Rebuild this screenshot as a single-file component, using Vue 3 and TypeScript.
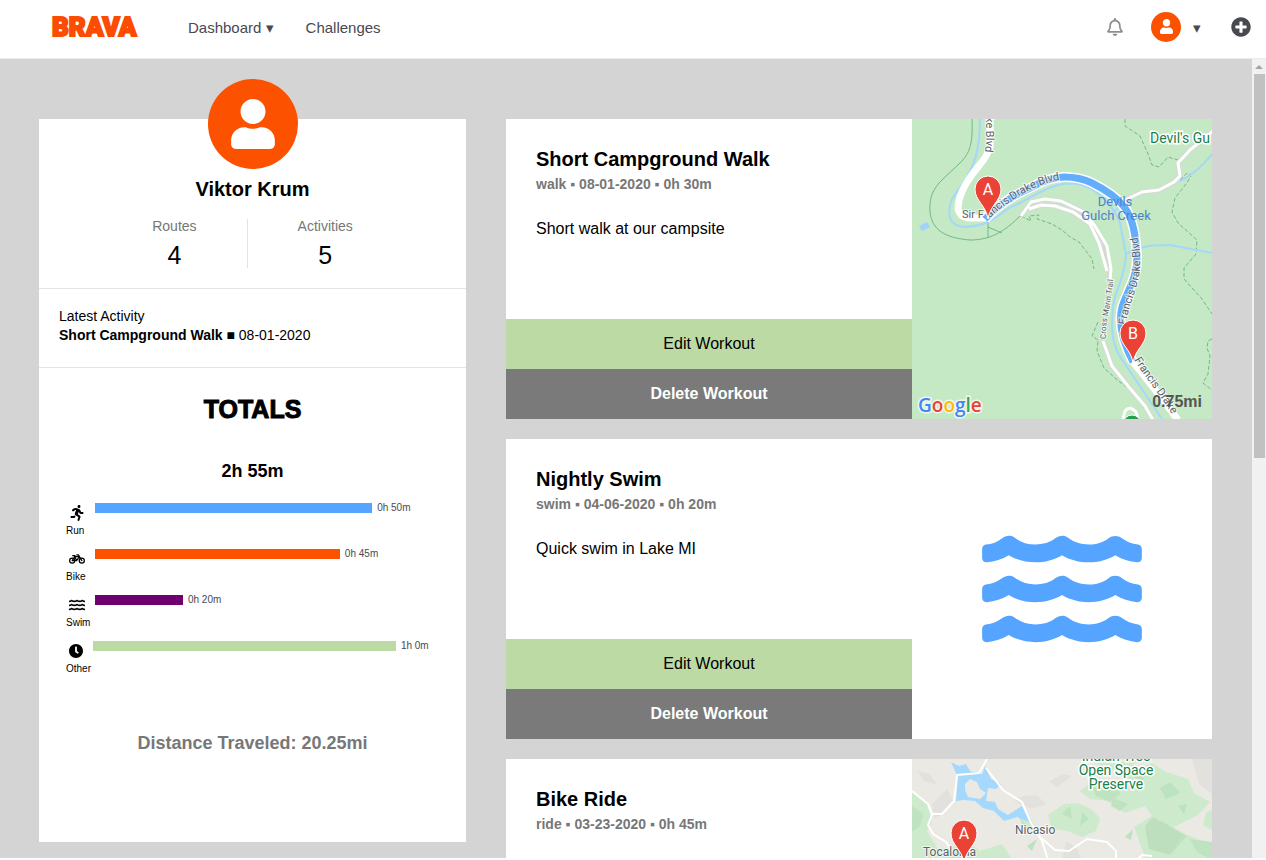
<script setup lang="ts">
interface Total {
  key: string
  label: string
  time: string
  share: number
}

interface Workout {
  id: number
  title: string
  kind: string
  date: string
  time: string
  note?: string
  art: 'gulch' | 'waves' | 'nicasio'
  miles?: string
}

const totals: Total[] = [
  { key: 'run', label: 'Run', time: '0h 50m', share: 74.7 },
  { key: 'bike', label: 'Bike', time: '0h 45m', share: 66 },
  { key: 'swim', label: 'Swim', time: '0h 20m', share: 23.7 },
  { key: 'other', label: 'Other', time: '1h 0m', share: 81.2 },
]

const workouts: Workout[] = [
  { id: 1, title: 'Short Campground Walk', kind: 'walk', date: '08-01-2020', time: '0h 30m', note: 'Short walk at our campsite', art: 'gulch', miles: '0.75mi' },
  { id: 2, title: 'Nightly Swim', kind: 'swim', date: '04-06-2020', time: '0h 20m', note: 'Quick swim in Lake MI', art: 'waves' },
  { id: 3, title: 'Bike Ride', kind: 'ride', date: '03-23-2020', time: '0h 45m', art: 'nicasio' },
]

const userPath = 'M224 256c70.7 0 128-57.3 128-128S294.7 0 224 0 96 57.3 96 128s57.3 128 128 128zm89.6 32h-16.7c-22.2 10.2-46.9 16-72.9 16s-50.6-5.8-72.9-16h-16.7C60.2 288 0 348.2 0 422.4V464c0 26.5 21.5 48 48 48h352c26.5 0 48-21.5 48-48v-41.6c0-74.2-60.2-134.4-134.4-134.4z'
const wavePath = 'M562.1 383.9c-21.5-2.4-42.1-10.5-57.9-22.9-14.1-11.1-34.2-11.3-48.2 0-37.9 30.4-107.2 30.4-145.7-1.5-13.5-11.2-33-9.1-46.7 1.8-38 30.1-106.9 30-145.2-1.7-13.5-11.2-33.3-8.9-47.1 2-15.5 12.2-36 20.1-57.7 22.4-7.9.8-13.6 7.8-13.6 15.7v32.2c0 9.1 7.6 16.8 16.7 16 28.8-2.5 56.1-11.4 79.4-25.9 56.5 34.6 137 34.1 192 0 56.5 34.6 137 34.1 192 0 23.3 14.2 50.9 23.3 79.1 25.8 9.1.8 16.7-6.9 16.7-16v-31.6c.1-8-5.7-15.4-13.8-16.3z'
const blvdPath = 'M73 100C84 88 100 77 118 69C132 61 142 58 152 58C165 58 172 60 180 64C192 70 206 79 213 89C222 101 224 120 225 138C225 160 215 172 210 188C206 204 210 222 221 243'
</script>

<template>
  <div class="page">
    <header class="topbar">
      <a class="logo" href="#">BRAVA</a>
      <nav class="links">
        <a href="#">Dashboard ▾</a>
        <a href="#">Challenges</a>
      </nav>
      <div class="tools">
        <button class="tool" type="button" aria-label="Notifications">
          <svg width="16" height="18" viewBox="0 0 448 512" fill="#8e8e90"><path d="M439.39 362.29c-19.32-20.76-55.47-51.99-55.47-154.29 0-77.7-54.48-139.9-127.94-155.16V32c0-17.67-14.32-32-31.98-32s-31.98 14.33-31.98 32v20.84C118.56 68.1 64.08 130.3 64.08 208c0 102.3-36.15 133.53-55.47 154.29-6 6.45-8.66 14.16-8.61 21.71.11 16.4 12.98 32 32.1 32h383.8c19.12 0 32-15.6 32.1-32 .05-7.55-2.61-15.27-8.61-21.71zM67.53 368c21.22-27.97 44.42-74.33 44.53-159.42 0-.2-.06-.38-.06-.58 0-61.86 50.14-112 112-112s112 50.14 112 112c0 .2-.06.38-.06.58.11 85.1 23.31 131.46 44.53 159.42H67.53zM224 512c35.32 0 63.97-28.65 63.97-64H160.03c0 35.35 28.65 64 63.97 64z" /></svg>
        </button>
        <button class="tool account" type="button" aria-label="Account">
          <span class="face"><svg width="13" height="15" viewBox="0 0 448 512" fill="#fff"><path :d="userPath" /></svg></span>
          <span class="caret">▾</span>
        </button>
        <button class="tool" type="button" aria-label="Add workout">
          <svg width="20" height="20" viewBox="0 0 512 512" fill="#494950"><path d="M256 8C119 8 8 119 8 256s111 248 248 248 248-111 248-248S393 8 256 8zm144 276c0 6.600-5.400 12-12 12h-92v92c0 6.600-5.400 12-12 12h-56c-6.600 0-12-5.400-12-12v-92h-92c-6.600 0-12-5.400-12-12v-56c0-6.600 5.400-12 12-12h92v-92c0-6.600 5.400-12 12-12h56c6.600 0 12 5.400 12 12v92h92c6.600 0 12 5.400 12 12v56z" /></svg>
        </button>
      </div>
    </header>

    <div class="body">
      <main class="content">
        <aside class="profile">
          <section class="who">
            <div class="avatar"><svg width="44" height="50" viewBox="0 0 448 512" fill="#fff"><path :d="userPath" /></svg></div>
            <h1>Viktor Krum</h1>
            <dl class="stats">
              <div><dt>Routes</dt><dd>4</dd></div>
              <div><dt>Activities</dt><dd>5</dd></div>
            </dl>
          </section>
          <section class="latest">
            <p>Latest Activity</p>
            <p><strong>Short Campground Walk</strong> ■ 08-01-2020</p>
          </section>
          <section class="totals">
            <h2>TOTALS</h2>
            <h3>2h 55m</h3>
            <ul class="chart">
              <li v-for="t in totals" :key="t.key" :class="t.key">
                <div class="sport">
                  <svg v-if="t.key === 'run'" width="16" height="16" viewBox="-48 0 512 512"><path d="M272 96c26.510 0 48-21.490 48-48S298.510 0 272 0s-48 21.490-48 48 21.490 48 48 48zM113.690 317.470l-14.800 34.520H32c-17.670 0-32 14.330-32 32s14.330 32 32 32h77.450c19.250 0 36.580-11.440 44.110-29.090l8.790-20.520-10.670-6.300c-17.320-10.230-30.060-25.370-37.990-42.610zM384 223.990h-44.030l-26.060-53.250c-12.500-25.550-35.450-44.230-61.780-50.940l-71.080-21.140c-28.300-6.800-57.770-.55-80.840 17.140l-39.670 30.410c-14.030 10.750-16.690 30.830-5.940 44.860s30.840 16.660 44.860 5.920l39.690-30.410c7.670-5.890 17.440-8 25.270-6.140l14.700 4.370-37.460 87.390c-12.620 29.480-1.310 64.010 26.300 80.310l84.980 50.170-27.470 87.730c-5.280 16.860 4.110 34.820 20.970 40.090 3.190 1 6.410 1.480 9.580 1.480 13.610 0 26.230-8.770 30.520-22.450l31.640-101.060c5.910-20.770-2.890-43.080-21.640-54.390l-61.240-36.140 31.310-78.280 20.270 41.430c8 16.340 24.920 26.890 43.110 26.890H384c17.670 0 32-14.330 32-32s-14.330-31.990-32-31.990z" /></svg>
                  <svg v-else-if="t.key === 'bike'" width="16" height="16" viewBox="0 0 640 640" fill="none" stroke="#000" stroke-width="50" stroke-linejoin="round" stroke-linecap="round">
                    <circle cx="128" cy="384" r="102" /><circle cx="512" cy="384" r="102" />
                    <path d="M128 384L232 224H420L304 384H128M304 384L212 192M150 186H240M310 154H376L512 384" />
                  </svg>
                  <svg v-else-if="t.key === 'swim'" width="16" height="16" viewBox="0 -32 576 576"><path :d="wavePath" /><path :d="wavePath" transform="translate(0 -144)" /><path :d="wavePath" transform="translate(0 -288)" /></svg>
                  <svg v-else width="14" height="16" viewBox="8 -28 496 568"><path d="M256 8C119 8 8 119 8 256s111 248 248 248 248-111 248-248S393 8 256 8zm92.490 313l-20 25a16 16 0 0 1-22.490 2.500l-67-49.720a40 40 0 0 1-15-31.230V112a16 16 0 0 1 16-16h32a16 16 0 0 1 16 16V256l58 42.500A16 16 0 0 1 348.490 321z" /></svg>
                  <span>{{ t.label }}</span>
                </div>
                <div class="track">
                  <div class="bar" :style="{ width: t.share + '%' }"></div>
                  <span>{{ t.time }}</span>
                </div>
              </li>
            </ul>
            <h4>Distance Traveled: 20.25mi</h4>
          </section>
        </aside>

        <div class="feed">
          <article v-for="w in workouts" :key="w.id" class="card">
            <div class="info">
              <div class="text">
                <h2>{{ w.title }}</h2>
                <p class="meta">{{ w.kind }} ▪ {{ w.date }} ▪ {{ w.time }}</p>
                <p v-if="w.note" class="note">{{ w.note }}</p>
              </div>
              <button class="edit" type="button">Edit Workout</button>
              <button class="delete" type="button">Delete Workout</button>
            </div>
            <div class="art">
              <svg v-if="w.art === 'gulch'" class="map" viewBox="0 0 300 300">
                <rect width="300" height="300" fill="#c5e8c5" />
                <g fill="none" stroke="#6fbb83" stroke-width="1">
                  <path d="M60 0C61 25 58 34 48 44L32 59C20 70 17 80 18 93C20 111 33 119 58 121C78 121 92 113 108 97M76 100V119M76 108L90 114" />
                  <g stroke-dasharray="4 2">
                    <path d="M109 97L119 102L117 97L127 96L125 100L140 105L150 111L158 118L167 123L180 140L182 150" />
                    <path d="M213 0V7L228 17L236 35L240 46L247 48L256 38L270 42" />
                    <path d="M268 61L275 54L279 57L274 65L263 79L260 93L266 104L285 121L284 135L272 149L272 160L290 180L300 195" />
                    <path d="M186 203L180 217L186 221L185 232L192 249L203 259L214 268" />
                    <path d="M300 220L296 222L295 229L298 237L296 255L291 264L300 271" />
                  </g>
                </g>
                <path d="M7 107L15 103L18 108L10 112Z" fill="#9fd3fc" />
                <g fill="none" stroke="#a4d8fb" stroke-width="2">
                  <path d="M68 0C68 35 61 46 54 60L40 80C34 98 38 107 53 108C72 107 80 102 97 89C115 82 130 69 150 65C160 64 170 65 178 69C194 79 204 93 208 104L214 136C212 163 201 175 201 190C198 215 203 232 211 242L250 300" />
                  <path d="M214 135C228 127 240 126 258 126L300 134M268 62C280 56 290 48 300 35M200 95L208 87" />
                </g>
                <g fill="none" stroke="#d5dad5" stroke-width="5" stroke-linejoin="round">
                  <path d="M109 97L119 83L133 80L149 82L172 93L183 107L190 127L197 150L197 160M117 90L129 86L143 87L161 93L178 105L190 124L195 150M191 222L200 247L216 267L233 287L241 301" />
                  <path d="M301 12L278 31L266 44L268 57L262 63L247 71L230 73L213 81" />
                </g>
                <g fill="none" stroke="#fff" stroke-width="3" stroke-linejoin="round">
                  <path d="M109 97L119 83L133 80L149 82L172 93L183 107L195 127L199 150L198 162M117 90L129 86L143 87L161 93L178 105L187 124L195 152M191 222L200 247L216 267L233 287L241 301" />
                  <path d="M301 12L278 31L266 44L268 57L262 63L247 71L230 73L213 81M211 300L213 292Q218 286 224 293L226 300" />
                </g>
                <g fill="none" stroke="#fff" stroke-width="7">
                  <path d="M78 0V28Q76 36 66 48Q46 72 46 90Q48 98 56 99H74" />
                  <path d="M221 243Q240 266 266 301" />
                </g>
                <path :d="blvdPath" fill="none" stroke="#fff" stroke-width="10" />
                <path :d="blvdPath" fill="none" stroke="#62adfc" stroke-width="7" />
                <defs>
                  <path id="blvd-upper" d="M75 102C86 90 102 79 120 70C134 63 147 60 160 60" />
                  <path id="blvd-lower" d="M214 206C215 188 230 162 228 142C228 126 226 114 218 98" />
                  <path id="blvd-down" d="M217 228C221 246 244 268 266 305" />
                  <path id="blvd-top" d="M74 -11V12Q75 26 71 44" />
                  <path id="marin" d="M194 220C193 196 203 175 201 150" />
                </defs>
                <g class="road" font-size="11">
                  <text><textPath href="#blvd-top" startOffset="9">ke Blvd</textPath></text>
                  <text x="50" y="99">Sir F</text>
                  <text><textPath href="#blvd-upper" startOffset="4">ancis Drake Blvd</textPath></text>
                  <text><textPath href="#blvd-lower">Francis Drake Blvd</textPath></text>
                  <text><textPath href="#blvd-down" startOffset="14">Francis Drake</textPath></text>
                  <text font-size="8"><textPath href="#marin">Cross Marin Trail</textPath></text>
                </g>
                <g font-size="13" fill="#4d83cb" text-anchor="middle">
                  <text x="203" y="87">Devils</text><text x="204" y="101">Gulch Creek</text>
                </g>
                <text class="park" x="238" y="24" font-size="14">Devil's Gu</text>
                <g transform="translate(76 100)">
                  <path class="pin" d="M0 0C-2-14-13-18-13-30A13 13 0 0 1 13-30C13-18 2-14 0 0Z" /><text class="letter" y="-24">A</text>
                </g>
                <g transform="translate(221 244)">
                  <path class="pin" d="M0 0C-2-14-13-18-13-30A13 13 0 0 1 13-30C13-18 2-14 0 0Z" /><text class="letter" y="-24">B</text>
                </g>
                <circle cx="220" cy="305" r="9" fill="#2a9d4c" stroke="#fff" />
                <text class="google" x="6" y="293"><tspan fill="#4285f4">G</tspan><tspan fill="#ea4335">o</tspan><tspan fill="#fbbc05">o</tspan><tspan fill="#4285f4">g</tspan><tspan fill="#34a853">l</tspan><tspan fill="#ea4335">e</tspan></text>
              </svg>

              <svg v-else-if="w.art === 'waves'" width="160" height="142" viewBox="0 0 576 512" fill="#55a4ff">
                <path :d="wavePath" /><path :d="wavePath" transform="translate(0 -144)" /><path :d="wavePath" transform="translate(0 -288)" />
              </svg>

              <svg v-else class="map" viewBox="0 0 300 300">
                <rect width="300" height="300" fill="#ebe9e4" />
                <g fill="#cdebcc">
                  <path d="M0 33L14 42L20 62L15 72L26 90L40 88L55 82L68 92L90 85L100 100L300 130V300H0Z" />
                  <path d="M136 56L152 45L166 44L179 50L188 59L184 72L170 78L155 72L140 70Z" />
                  <path d="M168 32L183 20L203 26L222 12L240 4L252 12L276 20L282 34L298 43L286 56L262 68L243 61L233 47L213 54L196 42L178 40Z" />
                  <path d="M222 68L240 57L273 75L300 86V101H234Z" /><path d="M181 0L200 5L229 0L210 14L190 9ZM106 56L119 60L127 72L112 68Z" />
                  <path d="M294 54L300 50V71L291 66Z" />
                </g>
                <g fill="#bfe2c1">
                  <path d="M0 47L11 55L8 67L0 73ZM35 92L50 88L62 100H34ZM180 27L192 24L209 34L198 43L184 37ZM235 67L250 62L275 77L260 94L240 88ZM278 80L300 83V101L285 93ZM201 39L216 45L208 52L199 47Z" />
                </g>
                <path d="M233 67L241 58L270 76L258 96L237 90Z" fill="#bddfbd" />
                <g fill="#e3e1dd">
                  <path d="M20 45L35 30L42 43L30 56L22 59ZM5 12L18 15L25 26L12 22ZM102 42L120 50L135 45L124 36L111 37ZM145 28L160 17L151 15L137 22ZM154 83L163 87L170 100H150ZM280 0H300V35L287 25Z" />
                </g>
                <g fill="#bce3c0"><path d="M107 58L117 70L111 66ZM150 55L158 47L160 60ZM170 53L177 60L168 67ZM221 18L236 12L230 22ZM248 29L258 23L268 34L254 40ZM266 47L275 45L272 55ZM115 87L125 80L120 92ZM213 78L221 70L219 81Z" /></g>
                <path d="M39 3L47 7L54 5L58 12L70 15L68 22L73 7L79 20L89 25L84 30L76 29L74 42L83 43L86 50L96 56L110 47L119 64L105 58L92 62L82 52L71 49L63 42L51 41L44 42L46 19Z" fill="#a4d8fd" />
                <path d="M53 25L58 20L65 23L68 30L74 34L68 40L56 38L53 31Z" fill="#ebe9e4" />
                <g fill="none" stroke="#fff" stroke-width="2">
                  <path d="M0 32L16 45L20 55L30 55L42 42L45 16L67 14L75 0M74 9L91 31L110 43L118 62L130 82L136 101" />
                  <path d="M20 56L16 66L21 75L34 83L41 94M128 78L143 91L157 92L175 80L195 83L204 92V101M225 101L230 96L240 97" />
                </g>
                <g class="road" font-size="12"><text x="103" y="75">Nicasio</text><text x="11" y="97">Tocaloma</text></g>
                <g class="park" font-size="14" text-anchor="middle"><text x="204" y="2">Indian Tree</text><text x="204" y="16">Open Space</text><text x="204" y="30">Preserve</text></g>
                <g transform="translate(52 104)">
                  <path class="pin" d="M0 0C-2-14-13-18-13-30A13 13 0 0 1 13-30C13-18 2-14 0 0Z" /><text class="letter" y="-24">A</text>
                </g>
              </svg>
              <span v-if="w.miles" class="miles">{{ w.miles }}</span>
            </div>
          </article>
        </div>
      </main>
      <div class="scroll" aria-hidden="true">
        <svg width="14" height="15" viewBox="0 0 14 15"><path d="M3 10L7 6L11 10Z" fill="#a3a3a3" /></svg>
        <div class="thumb"></div>
      </div>
    </div>
  </div>
</template>

<style>
body {
  margin: 0;
  background: #fff;
}
</style>

<style scoped>
.page {
  display: flex;
  flex-direction: column;
  box-sizing: border-box;
  height: 100vh;
  padding-bottom: 2px;
  font-family: "Liberation Sans", Arial, sans-serif;
  color: #000;
  overflow: hidden;
}
h1, h2, h3, h4, p, dl, dd, ul {
  margin: 0;
  padding: 0;
}
button {
  border: 0;
  font-family: inherit;
  cursor: pointer;
}
.topbar {
  display: flex;
  align-items: center;
  flex: none;
  height: 59px;
  padding: 0 15px 0 52px;
  box-sizing: border-box;
  border-bottom: 1px solid #ececec;
}
.logo {
  width: 136px;
  padding-bottom: 4px;
  font: 900 26px/50px Roboto, sans-serif;
  color: #fc4c02;
  text-decoration: none;
  -webkit-text-stroke: 2px #fc4c02;
}
.links {
  display: flex;
  gap: 32px;
  padding-bottom: 3px;
}
.links a {
  font-size: 15px;
  line-height: 20px;
  color: #494950;
  text-decoration: none;
}
.tools {
  display: flex;
  align-items: center;
  gap: 28px;
  margin-left: auto;
  padding-bottom: 5px;
}
.tool {
  display: flex;
  align-items: center;
  padding: 0;
  background: none;
}
.account {
  gap: 9px;
}
.face {
  display: flex;
  align-items: center;
  justify-content: center;
  width: 30px;
  height: 30px;
  border-radius: 50%;
  background: #fc5200;
}
.caret {
  width: 13px;
  padding-top: 2px;
  font-size: 15px;
  color: #494950;
}
.body {
  display: flex;
  flex: 1;
  min-height: 0;
  background: #d4d4d4;
}
.content {
  flex: 1;
  display: grid;
  grid-template-columns: 427fr 706fr;
  gap: 40px;
  align-items: start;
  padding: 60px 40px 0 39px;
  overflow: hidden;
}
.scroll {
  flex: none;
  width: 14px;
  background: #f1f1f1;
}
.scroll svg {
  display: block;
}
.thumb {
  height: 48%;
  margin: 0 1px 0 2px;
  background: #c1c1c1;
}
.profile {
  background: #fff;
}
.who {
  display: flex;
  flex-direction: column;
  align-items: center;
  padding-bottom: 20px;
  border-bottom: 1px solid #e3e3e3;
}
.avatar {
  display: flex;
  align-items: center;
  justify-content: center;
  width: 90px;
  height: 90px;
  margin-top: -40px;
  border-radius: 50%;
  background: #fc5200;
}
.who h1 {
  margin: 8px 0 18px;
  font-size: 20px;
  line-height: 24px;
}
.stats {
  display: flex;
  text-align: center;
}
.stats div {
  padding: 0 50px;
}
.stats div + div {
  border-left: 1px solid #e3e3e3;
}
.stats dt {
  font-size: 14px;
  line-height: 14px;
  color: #777;
}
.stats dd {
  padding-top: 9px;
  font-size: 25px;
  line-height: 26px;
}
.latest {
  padding: 18px 20px 22px;
  border-bottom: 1px solid #e3e3e3;
  font-size: 14px;
  line-height: 19px;
}
.totals {
  padding: 24px 0 87px;
  text-align: center;
}
.totals h2 {
  font-size: 25px;
  line-height: 34px;
  -webkit-text-stroke: 1px #000;
}
.totals h3 {
  margin-top: 33px;
  font-size: 18px;
  line-height: 24px;
}
.chart {
  margin: 20px 0 0 27px;
  list-style: none;
}
.chart li {
  display: flex;
  height: 46px;
}
.sport {
  display: flex;
  flex-direction: column;
  align-items: flex-start;
  width: 29px;
  flex: none;
  font-size: 10px;
  line-height: 14px;
}
.other .sport {
  width: 27px;
}
.sport svg {
  margin: 2px 0 3px 3px;
}
.track {
  display: flex;
  flex: 1;
  height: 10px;
  gap: 5px;
  font-size: 10px;
  line-height: 10px;
  color: #494950;
  white-space: nowrap;
}
.bar {
  flex: none;
}
.run .bar {
  background: #55a4ff;
}
.bike .bar {
  background: #fc5200;
}
.swim .bar {
  background: #700070;
}
.other .bar {
  background: #bcdba4;
}
.totals h4 {
  margin-top: 44px;
  font-size: 18px;
  line-height: 24px;
  color: #777;
}
.feed {
  display: grid;
  gap: 20px;
}
.card {
  display: flex;
  min-height: 300px;
  background: #fff;
}
.info {
  display: flex;
  flex: 1;
  flex-direction: column;
}
.text {
  flex: 1;
  padding: 28px 30px 0;
}
.text h2 {
  font-size: 20px;
  line-height: 24px;
}
.meta {
  margin-top: 4px;
  font-size: 14px;
  font-weight: bold;
  line-height: 18px;
  color: #777;
}
.note {
  margin-top: 26px;
  font-size: 16px;
  line-height: 20px;
}
.edit, .delete {
  height: 50px;
  font-size: 16px;
}
.edit {
  background: #bcdba4;
  color: #000;
}
.delete {
  background: #7a7a7a;
  color: #fff;
  font-weight: bold;
}
.art {
  position: relative;
  display: flex;
  align-items: center;
  justify-content: center;
  flex: none;
  width: 300px;
}
.map {
  width: 300px;
  height: 300px;
  font-family: Roboto, sans-serif;
}
.road {
  fill: #5b6068;
  stroke: #fff;
  stroke-width: 2px;
  stroke-opacity: 0.7;
  paint-order: stroke;
}
.park {
  fill: #188049;
  stroke: #fff;
  stroke-width: 3px;
  paint-order: stroke;
}
.pin {
  fill: #ea4335;
  stroke: #fff;
  stroke-width: 1px;
}
.letter {
  fill: #fff;
  font-size: 16px;
  text-anchor: middle;
}
.google {
  font: 600 19px "Open Sans", sans-serif;
  stroke: #eef7ee;
  stroke-width: 3px;
  paint-order: stroke;
}
.miles {
  position: absolute;
  right: 10px;
  bottom: 7px;
  font-size: 16px;
  font-weight: bold;
  line-height: 20px;
  color: #555;
}
</style>
